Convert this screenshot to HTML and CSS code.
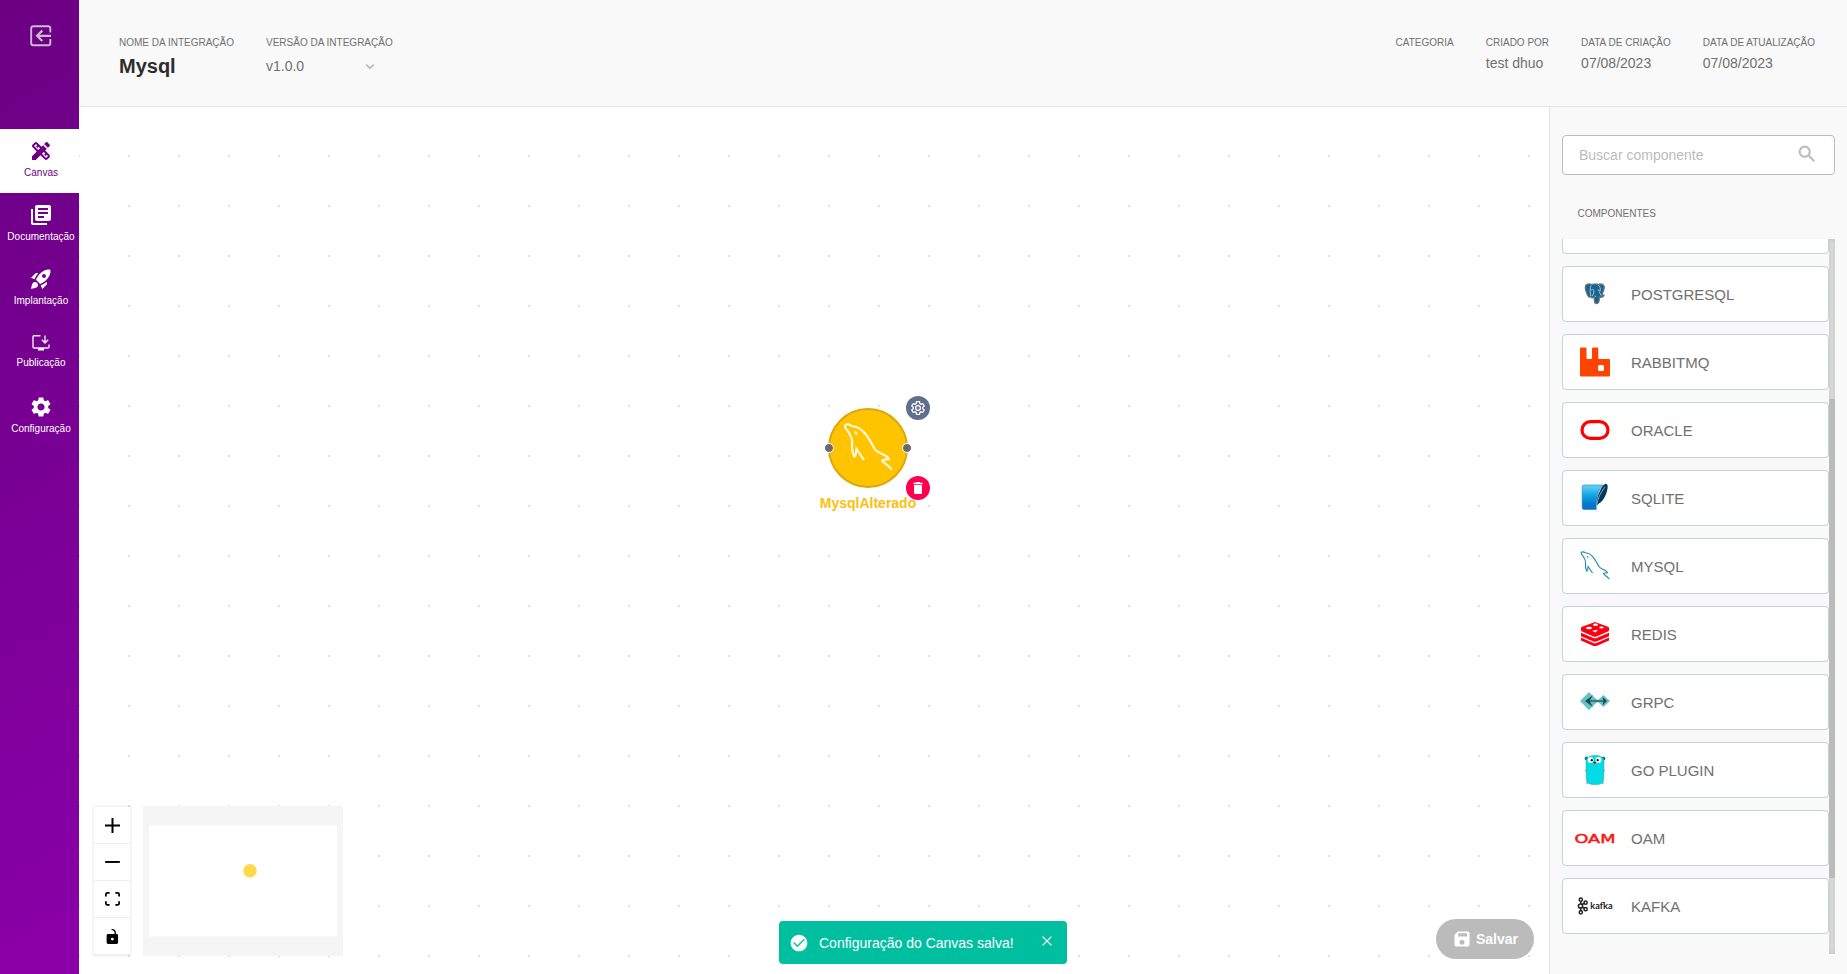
FILE: index.html
```html
<!DOCTYPE html>
<html lang="pt-BR">

<head>
    <meta charset="utf-8">
    <meta name="viewport" content="width=device-width, initial-scale=1.0">
    <title>Mysql</title>
    <link rel="stylesheet" href="styles.css">
</head>

<body>
    <nav class="sidebar">
        <button class="exit">
            <svg width="22" height="22" viewBox="0 0 22 22" fill="none" stroke="#c9bccf" stroke-width="1.9">
                <path d="M20.3 7.5V3.2a2 2 0 0 0-2-2H3.2a2 2 0 0 0-2 2v15.1a2 2 0 0 0 2 2h15.100a2 2 0 0 0 2-2v-4.300" />
                <path d="M21 10.800H7.500M12.300 5.600 7 10.800l5.300 5.200" stroke-width="2.200" />
            </svg>
        </button>
        <a class="item active">
            <svg width="24" height="24" viewBox="0 0 24 24">
                <path d="M16.24 11.51l1.57-1.57-3.75-3.75-1.57 1.57-4.14-4.13c-.78-.78-2.05-.78-2.83 0l-1.9 1.9c-.78.78-.78 2.05 0 2.83l4.13 4.13L3 17.25V21h3.75l4.76-4.76 4.13 4.13c.95.95 2.23.6 2.83 0l1.9-1.9c.78-.78.78-2.05 0-2.83l-4.14-4.13zm-7.06-.44L5.04 6.94l1.89-1.9L8.2 6.31 7.02 7.5l1.41 1.41 1.19-1.19 1.45 1.45-1.89 1.9zm7.88 7.89l-4.13-4.13 1.9-1.9 1.45 1.45-1.19 1.19 1.41 1.41 1.19-1.19 1.27 1.27-1.9 1.9zM20.71 7.04c.39-.39.39-1.02 0-1.41l-2.34-2.34c-.47-.47-1.12-.29-1.41 0l-1.83 1.83 3.75 3.75 1.83-1.83z" />
            </svg>
            <span>Canvas</span>
        </a>
        <a class="item">
            <svg width="24" height="24" viewBox="0 0 24 24">
                <path d="M4 6H2v14c0 1.1.9 2 2 2h14v-2H4V6zm16-4H8c-1.1 0-2 .9-2 2v12c0 1.1.9 2 2 2h12c1.1 0 2-.9 2-2V4c0-1.1-.9-2-2-2zm-1 9H9V9h10v2zm-4 4H9v-2h6v2zm4-8H9V5h10v2z" />
            </svg>
            <span>Documentação</span>
        </a>
        <a class="item">
            <svg width="24" height="24" viewBox="0 0 24 24">
                <path d="M9.19 6.35c-2.04 2.29-3.44 5.58-3.57 5.89L2 10.69l4.05-4.05c.47-.47 1.15-.68 1.81-.55l1.33.26zM11.17 17s3.74-1.55 5.89-3.7c5.4-5.4 4.5-9.62 4.21-10.57-.95-.3-5.17-1.19-10.57 4.21C8.55 9.09 7 12.83 7 12.83L11.17 17zm6.48-2.19c-2.29 2.04-5.58 3.44-5.89 3.57L13.31 22l4.05-4.05c.47-.47.68-1.15.55-1.81l-.26-1.33zM9 18c0 .83-.34 1.58-.88 2.12C6.94 21.3 2 22 2 22s.7-4.94 1.88-6.12C4.42 15.34 5.17 15 6 15c1.66 0 3 1.34 3 3zm4-9c0-1.1.9-2 2-2s2 .9 2 2-.9 2-2 2-2-.9-2-2z" />
            </svg>
            <span>Implantação</span>
        </a>
        <a class="item">
            <svg width="20" height="20" viewBox="0 0 20 20" fill="none">
                <path d="M9.5 2.7H3a1 1 0 0 0-1 1V14a1 1 0 0 0 1 1h14a1 1 0 0 0 1-1v-2.5M14 2.5v7M10.8 6.7 14 9.9l3.2-3.2" stroke="#f5e8f8" stroke-width="1.4" />
                <path d="M7 15h6v2.5H7z" fill="#fff" />
            </svg>
            <span>Publicação</span>
        </a>
        <a class="item">
            <svg width="24" height="24" viewBox="0 0 24 24">
                <path id="gear" d="M19.14 12.94c.04-.3.06-.61.06-.94 0-.32-.02-.64-.07-.94l2.03-1.58c.18-.14.23-.41.12-.61l-1.92-3.32c-.12-.22-.37-.29-.59-.22l-2.39.96c-.5-.38-1.03-.7-1.62-.94l-.36-2.54c-.04-.24-.24-.41-.48-.41h-3.84c-.24 0-.43.17-.47.41l-.36 2.54c-.59.24-1.13.57-1.62.94l-2.39-.96c-.22-.08-.47 0-.59.22L2.74 8.87c-.12.21-.08.47.12.61l2.03 1.58c-.05.3-.09.63-.09.94s.02.64.07.94l-2.03 1.58c-.18.14-.23.41-.12.61l1.92 3.32c.12.22.37.29.59.22l2.39-.96c.5.38 1.03.7 1.62.94l.36 2.54c.05.24.24.41.48.41h3.84c.24 0 .44-.17.47-.41l.36-2.54c.59-.24 1.13-.56 1.62-.94l2.39.96c.22.08.47 0 .59-.22l1.92-3.32c.12-.22.07-.47-.12-.61l-2.01-1.58zM12 15.6c-1.98 0-3.6-1.62-3.6-3.6s1.62-3.6 3.6-3.6 3.6 1.62 3.6 3.6-1.62 3.6-3.6 3.6z" />
            </svg>
            <span>Configuração</span>
        </a>
    </nav>

    <div class="page">
        <header class="header">
            <div class="field">
                <label>NOME DA INTEGRAÇÃO</label>
                <h1>Mysql</h1>
            </div>
            <div class="field">
                <label>VERSÃO DA INTEGRAÇÃO</label>
                <div class="version">
                    <span>v1.0.0</span>
                    <svg width="10" height="8" viewBox="0 0 10 8" fill="none" stroke="#bbb" stroke-width="1.7">
                        <path d="M1.2 2.5 5 6.2l3.8-3.7" />
                    </svg>
                </div>
            </div>
            <div class="field first-right">
                <label>CATEGORIA</label>
            </div>
            <div class="field">
                <label>CRIADO POR</label>
                <p>test dhuo</p>
            </div>
            <div class="field">
                <label>DATA DE CRIAÇÃO</label>
                <p>07/08/2023</p>
            </div>
            <div class="field">
                <label>DATA DE ATUALIZAÇÃO</label>
                <p>07/08/2023</p>
            </div>
        </header>

        <div class="content">
            <main class="canvas">
                <svg class="dots" width="100%" height="100%">
                    <pattern id="grid" x="-25" y="-26" width="50" height="50" patternUnits="userSpaceOnUse">
                        <circle cx="25" cy="25" r="0.8" fill="#bbb" />
                    </pattern>
                    <rect width="100%" height="100%" fill="url(#grid)" />
                </svg>

                <div class="node">
                    <div class="circle">
                        <svg width="50" height="50" viewBox="0 0 30 30" fill="none" stroke="#fff7d6" stroke-width="1.3">
                            <path id="dolphin" d="M1 1.7C2 .3 4 .8 5.3 1.8 8 2 11.500 4 13.500 6.600c2.500 3.200 4 6.200 5.300 8.700 1.200 2.200 4 2.800 6.500 4.200 1.300.8 2 1.500 2.200 2.200-1.300 0-3.300.2-4 1 1.300 1.800 3.800 2.500 5.700 5.300M1 1.700C1.200 3.500 2.800 4.200 3.500 5.700c.8 1.800 2.200 3.300 2 5.500-.2 2.800-.5 5.800 1.300 9 1-.5 1-2.500 1.300-4.700 1.300 1.800 2.700 4.500 4.500 6.500" />
                            <path d="M7 5.2q1.2.5.8 1.6" />
                        </svg>
                    </div>
                    <i class="handle left"></i>
                    <i class="handle right"></i>
                    <button class="round config">
                        <svg width="16" height="16" viewBox="0 0 24 24" fill="none" stroke="#fff" stroke-width="1.9">
                            <use href="#gear" />
                        </svg>
                    </button>
                    <strong class="name">MysqlAlterado</strong>
                    <button class="round delete">
                        <svg width="16" height="16" viewBox="0 0 24 24" fill="#fff">
                            <path d="M6 19c0 1.1.9 2 2 2h8c1.1 0 2-.9 2-2V7H6v12zM19 4h-3.5l-1-1h-5l-1 1H5v2h14V4z" />
                        </svg>
                    </button>
                </div>

                <div class="controls">
                    <button><svg width="15" height="15" viewBox="0 0 32 32">
                            <path d="M32 18.133H18.133V32h-4.266V18.133H0v-4.266h13.867V0h4.266v13.867H32z" />
                        </svg></button>
                    <button><svg width="15" height="2.3" viewBox="0 0 32 5">
                            <path d="M0 0h32v4.2H0z" />
                        </svg></button>
                    <button><svg width="15" height="14" viewBox="0 0 32 30">
                            <path d="M3.692 4.63c0-.53.4-.938.939-.938h5.215V0H4.708C2.13 0 0 2.054 0 4.63v5.216h3.692V4.631zM27.354 0h-5.2v3.692h5.17c.53 0 .984.4.984.939v5.215H32V4.631A4.624 4.624 0 0027.354 0zm.954 24.83c0 .532-.4.94-.939.94h-5.215v3.768h5.215c2.577 0 4.631-2.13 4.631-4.707v-5.139h-3.692v5.139zm-23.677.94c-.531 0-.939-.4-.939-.94v-5.138H0v5.139c0 2.577 2.13 4.707 4.708 4.707h5.138V25.77H4.631z" />
                        </svg></button>
                    <button><svg width="13" height="15" viewBox="0 0 25 32">
                            <path d="M21.333 10.667H19.81V7.619C19.81 3.429 16.38 0 12.19 0c-4.114 1.828-1.37 2.133.305 2.438 1.676.305 4.42 2.59 4.42 5.181v3.048H3.047A3.056 3.056 0 000 13.714v15.238A3.056 3.056 0 003.048 32h18.285a3.056 3.056 0 003.048-3.048V13.714a3.056 3.056 0 00-3.048-3.047zM12.19 24.533a3.056 3.056 0 01-3.047-3.047 3.056 3.056 0 013.047-3.048 3.056 3.056 0 013.048 3.048 3.056 3.056 0 01-3.048 3.047z" />
                        </svg></button>
                </div>

                <div class="minimap">
                    <svg width="200" height="150" viewBox="0 0 200 150">
                        <rect x="6" y="19.5" width="188" height="111" fill="#fff" />
                        <circle cx="107" cy="64.7" r="6.8" fill="#ffd84d" />
                    </svg>
                </div>

                <button class="save">
                    <svg width="20" height="20" viewBox="0 0 24 24" fill="#fff">
                        <path d="M17 3H7L3 7v12c0 1.1.89 2 2 2h14c1.1 0 2-.9 2-2V5c0-1.1-.9-2-2-2h-2zm-5 16c-1.66 0-3-1.34-3-3s1.34-3 3-3 3 1.34 3 3-1.34 3-3 3zm6-10H7.5V5H18v4z" />
                    </svg>
                    Salvar
                </button>
            </main>

            <aside class="panel">
                <div class="search">
                    <span>Buscar componente</span>
                    <svg width="22" height="22" viewBox="0 0 24 24" fill="#bbb" stroke="#bbb" stroke-width=".3">
                        <path d="M15.5 14h-.79l-.28-.27C15.41 12.59 16 11.11 16 9.5 16 5.91 13.09 3 9.5 3S3 5.91 3 9.5 5.91 16 9.5 16c1.61 0 3.09-.59 4.23-1.57l.27.28v.79l5 4.99L20.49 19l-4.99-5zm-6 0C7.01 14 5 11.99 5 9.5S7.01 5 9.5 5 14 7.01 14 9.5 11.99 14 9.5 14z" />
                    </svg>
                </div>
                <h2>COMPONENTES</h2>
                <div class="scroller">
                    <div class="list">
                        <div class="card">
                            <!-- tip of the logo cut by the scroll -->
                            <div class="logo"><svg width="30" height="30" viewBox="0 0 30 30">
                                    <path d="M15.500 26v2" stroke="#999" />
                                </svg></div>
                        </div>
                        <div class="card">
                            <div class="logo"><svg width="22" height="22" viewBox="0 0 22 22">
                                    <path d="M2 2C4 .5 6 .8 8 1.500c2-.6 4-.7 6-.2 2.500-.6 5-.4 6 1.700 1 2.500-.7 6-2.200 8.700l2.200.6c-.5 1.700-2.500 2.200-4.600 1.700l-.4 4.500c-.3 2.500-4 2.800-4.500.3l-.4-4.600C8.500 15 7.500 15.200 6.700 13.500 6 14.800 4.800 14.300 4 13 2.500 10 0 5 2 2z" fill="#19638f" stroke="#6d777d" stroke-width="1.3" />
                                    <path d="M7.3 2.500C5.500 5 6 9 6.800 13M7 7.300c1-.8 2.400-.8 3 0l-.3 3L8 13M14 2c2.500 2 3 4 1.500 7.500l1.500 3M13.500 7.200h2.200M11 12.500l.5 1.500" fill="none" stroke="#c7dbe5" stroke-width=".8" />
                                </svg></div>
                            <span>POSTGRESQL</span>
                        </div>
                        <div class="card">
                            <div class="logo"><svg width="30" height="30" viewBox="0 0 30 30">
                                    <path fill-rule="evenodd" d="M1 .5h4.500a1 1 0 0 1 1 1V11a1 1 0 0 0 1 1H11a1 1 0 0 0 1-1V1.500a1 1 0 0 1 1-1h4.300a1 1 0 0 1 1 1V11a1 1 0 0 0 1 1H29a1 1 0 0 1 1 1v15.500a1 1 0 0 1-1 1H1a1 1 0 0 1-1-1v-27a1 1 0 0 1 1-1zM19.500 18a1.500 1.500 0 0 0-1.500 1.500v3a1.500 1.500 0 0 0 1.500 1.500h3a1.500 1.500 0 0 0 1.500-1.500v-3a1.500 1.500 0 0 0-1.500-1.500z" fill="#ff4300" />
                                </svg></div>
                            <span>RABBITMQ</span>
                        </div>
                        <div class="card">
                            <div class="logo"><svg width="30" height="20" viewBox="0 0 30 20">
                                    <rect x="2" y="1.7" width="26" height="16.6" rx="8.3" fill="none" stroke="#f00" stroke-width="3.2" />
                                </svg></div>
                            <span>ORACLE</span>
                        </div>
                        <div class="card">
                            <div class="logo"><svg width="30" height="30" viewBox="0 0 30 30">
                                    <linearGradient id="sqlite" x2="0" y2="1">
                                        <stop offset="0" stop-color="#6cd3f5" />
                                        <stop offset=".45" stop-color="#0aa2e6" />
                                        <stop offset=".8" stop-color="#0873c8" />
                                    </linearGradient>
                                    <path d="M4 2h19c-5 5-7 12-6.500 24.500H4A1.800 1.800 0 0 1 2.200 24.700V3.800A1.800 1.800 0 0 1 4 2z" fill="url(#sqlite)" stroke="#0f80cc" stroke-width=".6" />
                                    <path d="M25.500.7c3-.6 2.500 5 1 9-1.300 4.300-4.300 8.800-6.500 10-1.500.7-2.700 2-3.300 4-.3-6 .8-12 3.800-17 1.500-3 3.300-5.500 5-6z" fill="#06395b" />
                                    <path d="M25 4c-4 5-7.500 11-8.500 19l.6 6" fill="none" stroke="#b9d5e5" stroke-width=".7" />
                                </svg></div>
                            <span>SQLITE</span>
                        </div>
                        <div class="card">
                            <div class="logo"><svg width="30" height="30" viewBox="0 0 30 30" fill="none" stroke="#2289a5" stroke-width="1.1">
                                    <use href="#dolphin" />
                                    <path d="M7 5.2q1.2.5.8 1.6" />
                                </svg></div>
                            <span>MYSQL</span>
                        </div>
                        <div class="card">
                            <div class="logo"><svg width="28" height="24" viewBox="0 0 28 24" fill="#fd0012">
                                    <path d="M14 0 27 4.800q1 .4 1 1.200v2.200q0 .8-1 1.200l-11.500 5q-1.500.6-3 0L1 9.400Q0 9 0 8.200V6q0-.8 1-1.200z" />
                                    <path d="M0 10.800 12.500 16q1.500.6 3 0L28 10.800v3.400L15.500 19.500q-1.500.6-3 0L0 14.200z" />
                                    <path d="M0 15.600 12.500 21q1.500.6 3 0L28 15.600v2.900L15.500 24q-1.500.6-3 0L0 18.500z" />
                                    <g fill="#fff">
                                        <ellipse cx="14.500" cy="2.800" rx="2.400" ry="1.200" />
                                        <ellipse cx="8" cy="6" rx="3" ry="1.300" />
                                        <ellipse cx="20.500" cy="5.500" rx="2.300" ry="1" />
                                        <path d="m11 8.700 6-1-2.500 2.800z" />
                                    </g>
                                </svg></div>
                            <span>REDIS</span>
                        </div>
                        <div class="card">
                            <div class="logo"><svg class="grpc" width="30" height="18" viewBox="0 0 30 18">
                                    <path d="M0 9 9 0l6 6 3 2 5.500-5L30 9l-6.500 6-5.500-5-3 2-6 6z" fill="#61c4bf" />
                                    <path d="M7 9h19" stroke="#234558" stroke-width="1.2" />
                                    <path d="m13 3-8 6 8 6-3.500-6zM22.500 4.800 27 9l-4.500 4.200 1-4.200z" fill="#234558" />
                                </svg></div>
                            <span>GRPC</span>
                        </div>
                        <div class="card">
                            <div class="logo"><svg width="22" height="30" viewBox="0 0 22 30">
                                    <path d="M1 15.500h2M19 15.500h2M4 27l-1.500 2M18 27l1.500 2" stroke="#c9a88d" stroke-width="1.7" />
                                    <circle cx="2.500" cy="3.500" r="1.900" fill="#147f89" />
                                    <circle cx="19.500" cy="3.500" r="1.900" fill="#147f89" />
                                    <path d="M11 .4c6 0 9 2.400 9 7l-.3 17c0 3.600-3.500 5.200-8.700 5.200S2.300 28 2.300 24.400L2 7.400c0-4.600 3-7 9-7z" fill="#00dce5" stroke="#289ba2" stroke-width=".5" />
                                    <circle cx="6.500" cy="5" r="2.900" fill="#fff" />
                                    <circle cx="14.500" cy="5" r="2.900" fill="#fff" />
                                    <circle cx="7.800" cy="5.200" r="1.100" />
                                    <circle cx="13.700" cy="5.200" r="1.100" />
                                    <path d="M8.700 8.200q2-1.700 4 0L12 9.500H9.400z" fill="#a8947e" />
                                    <ellipse cx="10.700" cy="7.600" rx="1.300" ry=".8" fill="#222" />
                                </svg></div>
                            <span>GO PLUGIN</span>
                        </div>
                        <div class="card">
                            <div class="logo"><svg width="42" height="14" viewBox="0 0 42 14">
                                    <text class="oam" x="0.500" y="11.600" textLength="41" lengthAdjust="spacingAndGlyphs">OAM</text>
                                </svg></div>
                            <span>OAM</span>
                        </div>
                        <div class="card">
                            <div class="logo"><svg width="36" height="18" viewBox="0 0 36 18">
                                    <g fill="none" stroke="#222" stroke-width="1.500">
                                        <path d="M3.800 4v10M4 8l4-2M4 9.500l4 2" />
                                        <circle cx="3.800" cy="2.700" r="1.600" />
                                        <circle cx="3.500" cy="9" r="2.100" fill="#fff" />
                                        <circle cx="3.800" cy="15.300" r="1.600" />
                                        <circle cx="8.600" cy="5.700" r="1.600" />
                                        <circle cx="8.600" cy="12.200" r="1.600" />
                                    </g>
                                    <text class="kafka" x="13.300" y="12" textLength="22.200" lengthAdjust="spacingAndGlyphs">kafka</text>
                                </svg></div>
                            <span>KAFKA</span>
                        </div>
                    </div>
                    <div class="track">
                        <div class="thumb"></div>
                    </div>
                </div>
            </aside>
        </div>
    </div>

    <div class="toast">
        <svg width="20" height="20" viewBox="0 0 24 24" fill="#fff">
            <path d="M12 2C6.480 2 2 6.480 2 12s4.480 10 10 10 10-4.480 10-10S17.520 2 12 2zm-2 15-5-5 1.100-1.100 3.900 3.900 7.900-7.900L19 8l-9 9z" />
        </svg>
        <span>Configuração do Canvas salva!</span>
        <svg class="close" width="10" height="10" viewBox="0 0 10 10" stroke="#fff" stroke-width="1.3">
            <path d="m.6.6 8.800 8.800M9.400.6.6 9.400" />
        </svg>
    </div>
</body>

</html>
```
FILE: styles.css
```css
* {
    box-sizing: border-box;
}

body {
    margin: 0;
    height: 100vh;
    display: flex;
    overflow: hidden;
    background: #fff;
    color: #707070;
    font-family: "Liberation Sans", Arial, sans-serif;
    font-size: 14px;
}

button {
    border: 0;
    padding: 0;
    background: none;
    font-family: inherit;
}

h1, h2, p {
    margin: 0;
}

svg {
    display: block;
    flex-shrink: 0;
}

/* menu */
.sidebar {
    width: 79px;
    flex-shrink: 0;
    background: linear-gradient(150deg, #6c0082 0%, #70008a 20%, #8a00a8 100%);
}

.exit {
    display: flex;
    width: 100%;
    height: 129px;
    padding: 25px 0 0 30px;
}

.item {
    display: flex;
    flex-direction: column;
    align-items: center;
    justify-content: center;
    height: 64px;
    padding-left: 3px;
    color: #fff;
    fill: #fff;
    font-size: 10px;
    line-height: 20px;
}

.active {
    background: #fff;
    color: #6c0084;
    fill: #6c0084;
}

.page {
    flex: 1;
    display: flex;
    flex-direction: column;
    min-width: 0;
}

.header {
    display: flex;
    gap: 32px;
    height: 107px;
    padding: 36px 32px 0 40px;
    background: #f9f9f9;
    border-bottom: 1px solid #e5e5e5;
}

.field label {
    display: block;
    font-size: 10px;
    line-height: 14px;
}

.field p {
    margin-top: 5px;
    line-height: 16px;
}

.field h1 {
    margin-top: 4px;
    color: #2d2d2d;
    font-size: 20px;
    line-height: 24px;
}

.version {
    display: flex;
    align-items: center;
    justify-content: space-between;
    width: 109px;
    margin-top: 8px;
    line-height: 16px;
}

.first-right {
    margin-left: auto;
}

.content {
    flex: 1;
    display: flex;
    min-height: 0;
}

/* canvas */
.canvas {
    flex: 1;
    position: relative;
    overflow: hidden;
}

.dots {
    position: absolute;
    left: 0;
    top: 0;
}

.node {
    position: absolute;
    left: 749px;
    top: 301px;
    width: 80px;
}

.circle {
    display: flex;
    align-items: center;
    justify-content: center;
    height: 80px;
    border: 2px solid #dca70b;
    border-radius: 50%;
    background: #ffc400;
}

.handle {
    position: absolute;
    top: 35px;
    width: 10px;
    height: 10px;
    border: 1px solid #fff;
    border-radius: 50%;
    background: #6b6b6b;
}

.handle.left {
    left: -4px;
}

.handle.right {
    right: -4px;
}

.round {
    position: absolute;
    left: 78px;
    display: flex;
    align-items: center;
    justify-content: center;
    width: 24px;
    height: 24px;
    border-radius: 50%;
}

.config {
    top: -12px;
    background: #5f6f8d;
}

.delete {
    top: 68px;
    background: #ff0050;
}

.name {
    display: block;
    margin: 7px -20px 0;
    color: #fcbf10;
    line-height: 16px;
    text-align: center;
}

.controls {
    position: absolute;
    left: 15px;
    bottom: 19px;
    box-shadow: 0 0 2px 1px rgba(0, 0, 0, 0.08);
}

.controls button {
    display: flex;
    align-items: center;
    justify-content: center;
    width: 36px;
    height: 37px;
    background: #fefefe;
    border-bottom: 1px solid #eee;
}

.minimap {
    position: absolute;
    left: 64px;
    bottom: 18px;
    background: #f5f5f5;
}

.save {
    position: absolute;
    right: 15px;
    bottom: 15px;
    display: flex;
    align-items: center;
    gap: 4px;
    width: 98px;
    height: 40px;
    padding-left: 16px;
    border-radius: 20px;
    background: #bbb;
    color: #fff;
    font-size: 14px;
    font-weight: bold;
}

/* componentes */
.panel {
    width: 298px;
    padding: 28px 12px 0;
    border-left: 1px solid #e5e5e5;
    background: #f9f9f9;
}

.search {
    display: flex;
    align-items: center;
    justify-content: space-between;
    height: 40px;
    padding: 0 16px;
    border: 1px solid #bbb;
    border-radius: 4px;
    background: #fff;
    color: #bbb;
}

.search svg {
    margin-bottom: 2px;
}

.panel h2 {
    margin: 32px 0 0 15.5px;
    font-size: 10px;
    font-weight: normal;
    line-height: 14px;
}

.scroller {
    display: flex;
    height: 715px;
    margin-top: 18px;
}

.list {
    flex: 1;
    display: flex;
    flex-direction: column;
    justify-content: flex-end;
    gap: 12px;
    padding-bottom: 20px;
    overflow: hidden;
}

.card {
    display: flex;
    align-items: center;
    flex-shrink: 0;
    gap: 4px;
    height: 56px;
    border: 1px solid #c3d0df;
    border-radius: 4px;
    background: #fff;
    font-size: 15px;
}

.logo {
    display: flex;
    justify-content: center;
    width: 64px;
}

.grpc {
    margin-bottom: 2px;
}

.oam {
    fill: #fb1717;
    stroke: #fb1717;
    stroke-width: 0.5px;
    font: 12.5px "DejaVu Sans", sans-serif;
}

.kafka {
    fill: #222;
    font: bold 9px Lato, sans-serif;
}

.track {
    width: 6px;
    padding-top: 160px;
    background: #ddd;
    box-shadow: inset 0 0 5px rgba(0, 0, 0, 0.12);
}

.thumb {
    height: 479px;
    background: #bbb;
}

.toast {
    position: absolute;
    left: 779px;
    top: 921px;
    display: flex;
    align-items: center;
    width: 288px;
    height: 43px;
    padding: 0 15px 0 10px;
    border-radius: 4px;
    background: #00bfa1;
    color: #fff;
}

.toast span {
    margin-left: 10px;
}

.toast .close {
    margin: 0 0 4px auto;
}
```
